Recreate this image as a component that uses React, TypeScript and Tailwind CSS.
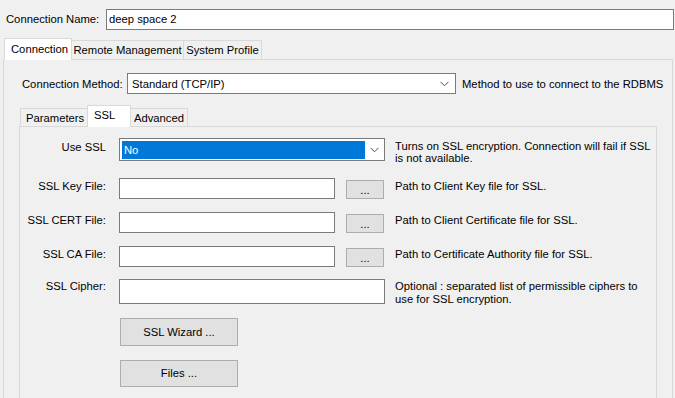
import React from "react";

const Chevron = () => (
  <svg width="9" height="6" viewBox="0 0 9 6" className="shrink-0">
    <path d="M0.5 0.8 L4.5 4.8 L8.5 0.8" fill="none" stroke="#505050" strokeWidth="1" />
  </svg>
);

const Label = ({ children, mt }: { children: React.ReactNode; mt: string }) => (
  <div className={`w-[86px] shrink-0 text-right leading-[14px] whitespace-nowrap ${mt}`}>{children}</div>
);

const FileRow = ({ label, desc }: { label: string; desc: string }) => (
  <div className="flex items-start h-[21px]">
    <Label mt="mt-[1px]">{label}</Label>
    <div className="ml-[13px] w-[216px] h-[21px] border border-[#7a7a7a] bg-white shrink-0" />
    <div className="ml-[11px] mt-[2px] w-[38px] h-[19px] border border-[#adadad] bg-[#e1e1e1] shrink-0 flex items-start justify-center leading-[14px] pt-[2px]">
      ...
    </div>
    <div className="ml-[11px] mt-[2px] leading-[13px] whitespace-nowrap">{desc}</div>
  </div>
);

export default function App() {
  return (
    <div className="w-[675px] h-[398px] overflow-hidden bg-[#f0f0f0] text-[11.25px] text-black font-['Liberation_Sans',Arial,sans-serif]">
      {/* Connection name */}
      <div className="flex items-center pt-[9px] pl-[6px] pr-[1px]">
        <span className="w-[100px] shrink-0 whitespace-nowrap">Connection Name:</span>
        <div className="h-[21px] flex-1 border border-[#7a7a7a] bg-white pl-[2px] leading-[18px] whitespace-nowrap">deep space 2</div>
      </div>

      {/* Outer tabs */}
      <div className="mt-[8px] ml-[4px] flex items-end h-[21px]">
        <div className="w-[68px] h-[22px] bg-white border border-b-0 border-[#d9d9d9] flex items-start pl-[6px] pt-[3px] leading-[14px] relative z-10 -mb-[1px] whitespace-nowrap">
          Connection
        </div>
        <div className="h-[19px] w-[112px] border border-l-0 border-b-0 border-[#d9d9d9] bg-[#f0f0f0] flex items-center justify-center leading-[14px] whitespace-nowrap">
          Remote Management
        </div>
        <div className="h-[19px] w-[78px] border border-l-0 border-b-0 border-[#d9d9d9] bg-[#f0f0f0] flex items-center justify-center leading-[14px] whitespace-nowrap">
          System Profile
        </div>
      </div>

      {/* Outer pane */}
      <div className="ml-[3px] mr-[2px] h-[400px] border border-[#d9d9d9] bg-[#f0f0f0]">
        <div className="mt-[13px] ml-[18px] flex items-center h-[21px]">
          <span className="w-[105px] shrink-0 whitespace-nowrap pt-[2px]">Connection Method:</span>
          <div className="w-[329px] h-[21px] border border-[#7a7a7a] bg-white flex items-center justify-between pl-[4px] pr-[6px] shrink-0">
            <span className="leading-[14px] whitespace-nowrap">Standard (TCP/IP)</span>
            <Chevron />
          </div>
          <span className="ml-[6px] whitespace-nowrap pt-[1px]">Method to use to connect to the RDBMS</span>
        </div>

        <div className="ml-[15px] mr-[15px] mt-[11px]">
          {/* Inner tabs */}
          <div className="flex items-end h-[21px] pl-[1px]">
            <div className="h-[18px] w-[67px] border border-r-0 border-b-0 border-[#d9d9d9] bg-[#f0f0f0] flex items-center pl-[5px] leading-[14px] whitespace-nowrap">
              Parameters
            </div>
            <div className="w-[44px] h-[22px] bg-white border border-b-0 border-[#d9d9d9] flex items-start pl-[6px] pt-[2px] leading-[14px] relative z-10 -mb-[1px] whitespace-nowrap">
              SSL
            </div>
            <div className="h-[18px] w-[57px] border border-l-0 border-b-0 border-[#d9d9d9] bg-[#f0f0f0] flex items-center justify-center leading-[14px] whitespace-nowrap">
              Advanced
            </div>
          </div>

          {/* Inner pane */}
          <div className="h-[300px] border border-[#d9d9d9] bg-[#f0f0f0] pt-[11px] flex flex-col">
            {/* Use SSL */}
            <div className="flex items-start h-[23px]">
              <Label mt="mt-[2px]">Use SSL</Label>
              <div className="ml-[13px] w-[266px] h-[23px] border border-[#7a7a7a] bg-white shrink-0 flex items-center pl-[2px] pr-[5px]">
                <div className="w-[243px] h-[18px] bg-[#0078d7] text-white leading-[18px] pl-[2px]">No</div>
                <div className="flex-1 flex justify-end">
                  <Chevron />
                </div>
              </div>
              <div className="ml-[10px] mt-[2px] leading-[12px] whitespace-nowrap">
                Turns on SSL encryption. Connection will fail if SSL
                <br />
                is not available.
              </div>
            </div>

            <div className="mt-[17px]">
              <FileRow label="SSL Key File:" desc="Path to Client Key file for SSL." />
            </div>
            <div className="mt-[13px]">
              <FileRow label="SSL CERT File:" desc="Path to Client Certificate file for SSL." />
            </div>
            <div className="mt-[13px]">
              <FileRow label="SSL CA File:" desc="Path to Certificate Authority file for SSL." />
            </div>

            {/* Cipher */}
            <div className="mt-[12px] flex items-start h-[25px]">
              <Label mt="mt-[0px]">SSL Cipher:</Label>
              <div className="ml-[13px] w-[266px] h-[25px] border border-[#7a7a7a] bg-white shrink-0" />
              <div className="ml-[10px] mt-[1px] leading-[13px] whitespace-nowrap">
                Optional : separated list of permissible ciphers to
                <br />
                use for SSL encryption.
              </div>
            </div>

            <div className="mt-[14px] ml-[100px] w-[118px] h-[28px] border border-[#adadad] bg-[#e1e1e1] flex items-center justify-center whitespace-nowrap">
              SSL Wizard ...
            </div>
            <div className="mt-[14px] ml-[100px] w-[118px] h-[27px] border border-[#adadad] bg-[#e1e1e1] flex items-center justify-center whitespace-nowrap">
              Files ...
            </div>
          </div>
        </div>
      </div>
    </div>
  );
}
